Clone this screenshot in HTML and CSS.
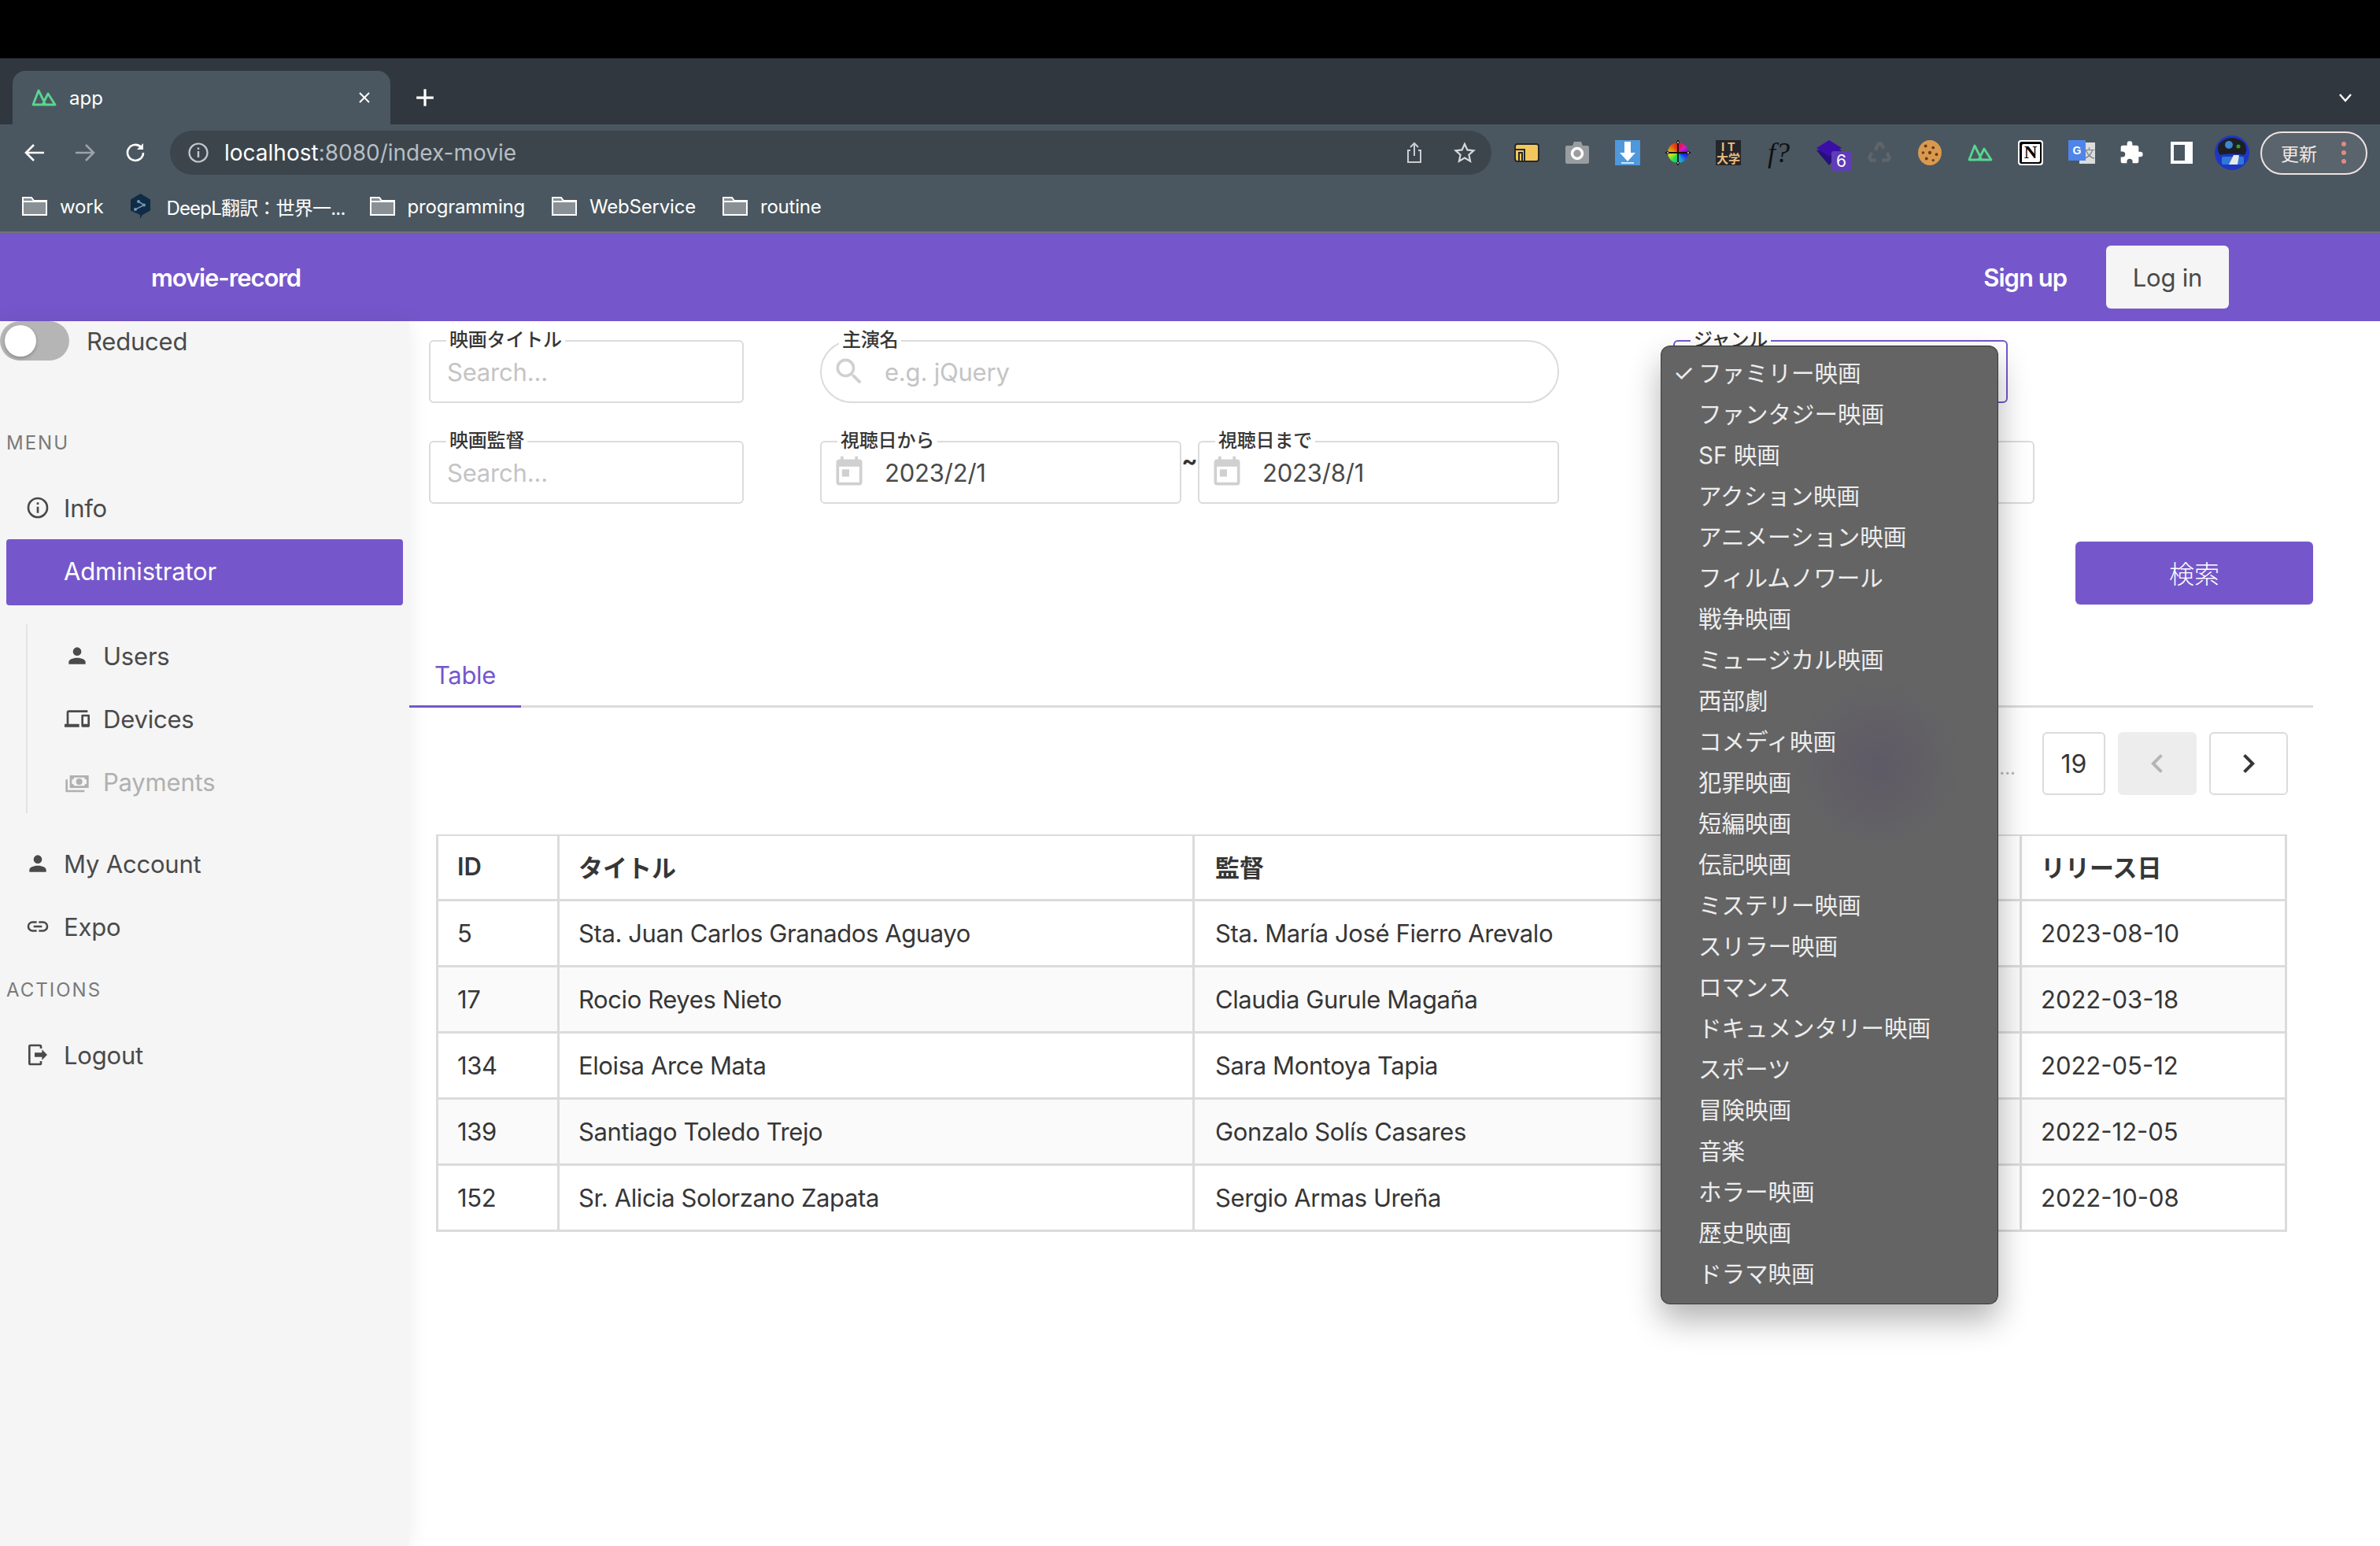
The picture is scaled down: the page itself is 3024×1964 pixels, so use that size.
FILE: index.html
```html
<!DOCTYPE html>
<html lang="ja">
<head>
  <meta charset="UTF-8" />
  <title>app</title>
  <link rel="stylesheet" href="styles.css">
</head>
<body>

<div class="topblack"></div>

<div class="tabstrip">
  <div class="tab">
    <svg class="favicon" viewBox="0 0 32 22"><path d="M12 20H2L9 2l8 16M14 20H30L21 6l-7 14" fill="none" stroke="#58d68f" stroke-width="2.8" stroke-linejoin="round" stroke-linecap="round"/></svg>
    <span class="tab-title">app</span>
    <svg class="tab-close" viewBox="0 0 16 16"><path d="M2 2l12 12M14 2L2 14" stroke="#fff" stroke-width="2"/></svg>
  </div>
  <svg class="tab-plus" viewBox="0 0 24 24"><path d="M12 2v20M2 12h20" stroke="#fff" stroke-width="3"/></svg>
  <svg class="tab-chevron" viewBox="0 0 20 20"><path d="M3 6l7 8 7-8" fill="none" stroke="#fff" stroke-width="2.4"/></svg>
</div>

<div class="toolbar">
  <div class="navbtn"><svg viewBox="0 0 28 28"><path d="M26 14H4M13 4L3 14l10 10" fill="none" stroke="#fff" stroke-width="2.6"/></svg></div>
  <div class="navbtn"><svg viewBox="0 0 28 28"><path d="M2 14h22M15 4l10 10-10 10" fill="none" stroke="#9ba3a8" stroke-width="2.6"/></svg></div>
  <div class="navbtn"><svg viewBox="0 0 28 28"><path d="M24 14a10 10 0 1 1-3-7.2" fill="none" stroke="#fff" stroke-width="2.6"/><path d="M24 2v8h-8z" fill="#fff"/></svg></div>

  <div class="omnibox">
    <svg class="omni-info" viewBox="0 0 28 28"><circle cx="14" cy="14" r="11.5" fill="none" stroke="#c4c9cc" stroke-width="2.2"/><path d="M14 12v8M14 7.5v2.4" stroke="#c4c9cc" stroke-width="2.4"/></svg>
    <span class="url">localhost<span class="url-rest">:8080/index-movie</span></span>
    <div class="omni-action"><svg viewBox="0 0 28 28"><path d="M9 11H6v15h16V11h-3M14 18V3M9 7l5-5 5 5" fill="none" stroke="#c9ced1" stroke-width="2"/></svg></div>
    <div class="omni-action"><svg viewBox="0 0 28 28"><path d="M14 3l3.4 7.4 8 .9-6 5.4 1.7 8L14 20.6 6.900 24.700l1.700-8-6-5.400 8-.9z" fill="none" stroke="#d5d9db" stroke-width="2.200"/></svg></div>
  </div>

  <div class="ext-list">
    <div class="ext"><svg viewBox="0 0 32 24"><rect x="1" y="1" width="30" height="22" rx="3" fill="#f2c75c" stroke="#26282b" stroke-width="2"/><path d="M2 8h11v15M6 23V12h4v11" fill="none" stroke="#26282b" stroke-width="2"/></svg></div>
    <div class="ext"><svg viewBox="0 0 32 30"><path d="M3 6h7l2-5h9l2 5h6a2 2 0 0 1 2 2v19a2 2 0 0 1-2 2H3a2 2 0 0 1-2-2V8a2 2 0 0 1 2-2z" fill="#9a9d9f"/><circle cx="16" cy="16" r="6.500" fill="none" stroke="#fff" stroke-width="3.500"/></svg></div>
    <div class="ext"><svg viewBox="0 0 32 32"><rect width="32" height="32" fill="#4f98db"/><path d="M12 2h8v14h6L16 27 6 16h6z" fill="#fff"/><path d="M8 29h16" stroke="#fff" stroke-width="1.500"/></svg></div>
    <div class="ext"><div class="wheel"><svg viewBox="0 0 32 32"><path d="M16 0v32M0 16h32" stroke="#111" stroke-width="1.800"/><g fill="#ddd" stroke="#111" stroke-width="1"><circle cx="16" cy="3" r="1.500"/><circle cx="16" cy="29" r="1.500"/><circle cx="3" cy="16" r="1.500"/><circle cx="29" cy="16" r="1.500"/></g></svg></div></div>
    <div class="ext"><div class="ext-it"><span>I T</span><span>大学</span></div></div>
    <div class="ext"><span class="ext-f">f?</span></div>
    <div class="ext ext-stack">
      <svg viewBox="0 0 32 32"><path d="M0 13l16-3 16 3-16 19z" fill="#25107c"/><path d="M16 0l16 10-16 11L0 10z" fill="#3c0ea8"/></svg>
      <span class="ext-badge">6</span>
    </div>
    <div class="ext"><svg viewBox="0 0 30 30"><g fill="none" stroke="#5f6569" stroke-width="4"><path d="M10 12l4-8h3l3 6"/><path d="M24 15l3 6-2 3h-7"/><path d="M11 24H5l-2-3 3-6"/></g></svg></div>
    <div class="ext"><svg viewBox="0 0 28 30"><ellipse cx="14" cy="15" rx="14" ry="15" fill="#d99a4f"/><g fill="#6a3b17"><circle cx="9" cy="7" r="1.800"/><circle cx="18" cy="9" r="1.800"/><circle cx="6" cy="15" r="1.600"/><circle cx="14" cy="15" r="2"/><circle cx="22" cy="17" r="1.800"/><circle cx="10" cy="22" r="1.800"/><circle cx="18" cy="24" r="1.600"/></g></svg></div>
    <div class="ext"><svg viewBox="0 0 32 22"><path d="M12 20H2L9 2l8 16M14 20H30L21 6l-7 14" fill="none" stroke="#58d68f" stroke-width="2.800" stroke-linejoin="round" stroke-linecap="round"/></svg></div>
    <div class="ext"><div class="ext-notion">N</div></div>
    <div class="ext ext-translate">
      <span class="tr-back">文</span>
      <span class="tr-front">G</span>
    </div>
    <div class="ext"><svg viewBox="0 0 24 24"><path d="M20.500 11H19V7a2 2 0 0 0-2-2h-4V3.500a2.500 2.500 0 0 0-5 0V5H4a2 2 0 0 0-2 2v3.800h1.500a2.700 2.700 0 0 1 0 5.400H2V20a2 2 0 0 0 2 2h3.800v-1.500a2.700 2.700 0 0 1 5.400 0V22H17a2 2 0 0 0 2-2v-4h1.500a2.500 2.500 0 0 0 0-5z" fill="#fff"/></svg></div>
    <div class="ext"><div class="ext-panel"></div></div>
    <div class="ext"><svg class="ext-avatar" viewBox="0 0 44 44"><circle cx="22" cy="22" r="22" fill="#1f35c4"/><path d="M6 10a22 22 0 0 1 32 0c3 6 3 12-1 15-5-2-25-2-30 0-4-4-4-10-1-15z" fill="#1c2024"/><circle cx="18" cy="12" r="5" fill="#3d86d0"/><circle cx="30" cy="14" r="2.500" fill="#3b9a2f"/><rect x="9" y="27" width="28" height="10" rx="2" fill="#2f78d8"/><path d="M18 37l6-12h7l-2 12z" fill="#e6ebe4"/></svg></div>
  </div>

  <div class="update-pill">
    <span>更新</span>
    <div class="update-dots"><i></i><i></i><i></i></div>
  </div>
</div>

<div class="bookmarks">
  <div class="bookmark"><svg viewBox="0 0 32 24"><path d="M1 1h11l3 4h16v18H1z" fill="#8a9196" stroke="#fff" stroke-width="2"/><path d="M1 6h30" stroke="#fff" stroke-width="2"/></svg><span>work</span></div>
  <div class="bookmark bookmark-deepl"><svg viewBox="0 0 27 32"><path d="M13.500 0L26 7.500v14L16 27l-3 5v-5L1 21.500v-14z" fill="#0f2b46"/><path d="M7 20L18 14.500 11 10" fill="none" stroke="#7496b4" stroke-width="1.600"/><g fill="#7496b4"><circle cx="7" cy="20" r="2"/><circle cx="18" cy="14.500" r="2"/><circle cx="11" cy="10" r="2"/></g></svg><span>DeepL翻訳：世界一...</span></div>
  <div class="bookmark"><svg viewBox="0 0 32 24"><path d="M1 1h11l3 4h16v18H1z" fill="#8a9196" stroke="#fff" stroke-width="2"/><path d="M1 6h30" stroke="#fff" stroke-width="2"/></svg><span>programming</span></div>
  <div class="bookmark"><svg viewBox="0 0 32 24"><path d="M1 1h11l3 4h16v18H1z" fill="#8a9196" stroke="#fff" stroke-width="2"/><path d="M1 6h30" stroke="#fff" stroke-width="2"/></svg><span>WebService</span></div>
  <div class="bookmark"><svg viewBox="0 0 32 24"><path d="M1 1h11l3 4h16v18H1z" fill="#8a9196" stroke="#fff" stroke-width="2"/><path d="M1 6h30" stroke="#fff" stroke-width="2"/></svg><span>routine</span></div>
</div>

<header class="navbar">
  <div class="brand">movie-record</div>
  <div class="nav-signup">Sign up</div>
  <div class="nav-login">Log in</div>
</header>

<div class="layout">

  <aside class="sidebar">
    <div class="reduce-row">
      <div class="switch"><div class="switch-knob"></div></div>
      <span>Reduced</span>
    </div>

    <div class="menu-label label-menu">MENU</div>
    <div class="menu-item"><svg class="mdi" viewBox="0 0 24 24"><path d="M11,9H13V7H11M12,20C7.59,20 4,16.41 4,12C4,7.590 7.590,4 12,4C16.410,4 20,7.590 20,12C20,16.410 16.410,20 12,20M12,2A10,10 0 0,0 2,12A10,10 0 0,0 12,22A10,10 0 0,0 22,12A10,10 0 0,0 12,2M11,17H13V11H11V17Z"/></svg>Info</div>
    <div class="menu-item menu-active">Administrator</div>

    <div class="submenu">
      <div class="menu-item"><svg class="mdi" viewBox="0 0 24 24"><path d="M12,4A4,4 0 0,1 16,8A4,4 0 0,1 12,12A4,4 0 0,1 8,8A4,4 0 0,1 12,4M12,14C16.420,14 20,15.790 20,18V20H4V18C4,15.790 7.580,14 12,14Z"/></svg>Users</div>
      <div class="menu-item"><svg class="mdi" viewBox="0 0 24 24"><path d="M22,17H18V10H22M23,8H17A1,1 0 0,0 16,9V19A1,1 0 0,0 17,20H23A1,1 0 0,0 24,19V9A1,1 0 0,0 23,8M4,6H22V4H4A2,2 0 0,0 2,6V17H0V20H14V17H4V6Z"/></svg>Devices</div>
      <div class="menu-item menu-disabled"><svg class="mdi" viewBox="0 0 24 24"><path d="M5,6H23V18H5V6M14,9A3,3 0 0,1 17,12A3,3 0 0,1 14,15A3,3 0 0,1 11,12A3,3 0 0,1 14,9M9,8A2,2 0 0,1 7,10V14A2,2 0 0,1 9,16H19A2,2 0 0,1 21,14V10A2,2 0 0,1 19,8H9M1,10H3V20H19V22H1V10Z"/></svg>Payments</div>
    </div>

    <div class="menu-item menu-account"><svg class="mdi" viewBox="0 0 24 24"><path d="M12,4A4,4 0 0,1 16,8A4,4 0 0,1 12,12A4,4 0 0,1 8,8A4,4 0 0,1 12,4M12,14C16.420,14 20,15.790 20,18V20H4V18C4,15.790 7.580,14 12,14Z"/></svg>My Account</div>
    <div class="menu-item"><svg class="mdi" viewBox="0 0 24 24"><path d="M3.900,12C3.900,10.290 5.290,8.900 7,8.900H11V7H7A5,5 0 0,0 2,12A5,5 0 0,0 7,17H11V15.100H7C5.290,15.100 3.900,13.710 3.900,12M8,13H16V11H8V13M17,7H13V8.900H17C18.710,8.900 20.100,10.290 20.100,12C20.100,13.710 18.710,15.100 17,15.100H13V17H17A5,5 0 0,0 22,12A5,5 0 0,0 17,7Z"/></svg>Expo</div>

    <div class="menu-label label-actions">ACTIONS</div>
    <div class="menu-item"><svg class="mdi" viewBox="0 0 24 24"><path d="M16,17V14H9V10H16V7L21,12L16,17M14,2A2,2 0 0,1 16,4V6H14V4H5V20H14V18H16V20A2,2 0 0,1 14,22H5A2,2 0 0,1 3,20V4A2,2 0 0,1 5,2H14Z"/></svg>Logout</div>
  </aside>

  <main class="content">
    <div class="form-row">
      <div class="field w-title">
        <label>映画タイトル</label>
        <span class="placeholder">Search...</span>
      </div>
      <div class="field field-round w-actor">
        <label>主演名</label>
        <svg class="field-icon" viewBox="0 0 24 24"><path d="M9.500,3A6.500,6.500 0 0,1 16,9.500C16,11.110 15.410,12.590 14.440,13.730L14.710,14H15.500L20.500,19L19,20.500L14,15.500V14.710L13.730,14.440C12.590,15.410 11.110,16 9.500,16A6.500,6.500 0 0,1 3,9.500A6.500,6.500 0 0,1 9.500,3M9.500,5C7,5 5,7 5,9.500C5,12 7,14 9.500,14C12,14 14,12 14,9.500C14,7 12,5 9.500,5Z"/></svg>
        <span class="placeholder">e.g. jQuery</span>
      </div>
      <div class="field field-focus w-genre">
        <label>ジャンル</label>
        <ul class="genre-menu">
          <li class="checked">ファミリー映画</li>
          <li>ファンタジー映画</li>
          <li>SF 映画</li>
          <li>アクション映画</li>
          <li>アニメーション映画</li>
          <li>フィルムノワール</li>
          <li>戦争映画</li>
          <li>ミュージカル映画</li>
          <li>西部劇</li>
          <li>コメディ映画</li>
          <li>犯罪映画</li>
          <li>短編映画</li>
          <li>伝記映画</li>
          <li>ミステリー映画</li>
          <li>スリラー映画</li>
          <li>ロマンス</li>
          <li>ドキュメンタリー映画</li>
          <li>スポーツ</li>
          <li>冒険映画</li>
          <li>音楽</li>
          <li>ホラー映画</li>
          <li>歴史映画</li>
          <li>ドラマ映画</li>
        </ul>
      </div>
    </div>

    <div class="form-row form-row-2">
      <div class="field w-title">
        <label>映画監督</label>
        <span class="placeholder">Search...</span>
      </div>
      <div class="field w-date date-from">
        <label>視聴日から</label>
        <svg class="field-icon" viewBox="0 0 24 24"><path d="M7,10H12V15H7M19,19H5V8H19M19,3H18V1H16V3H8V1H6V3H5C3.890,3 3,3.900 3,5V19A2,2 0 0,0 5,21H19A2,2 0 0,0 21,19V5A2,2 0 0,0 19,3Z"/></svg>
        <span class="date-value">2023/2/1</span>
      </div>
      <span class="tilde">~</span>
      <div class="field w-date">
        <label>視聴日まで</label>
        <svg class="field-icon" viewBox="0 0 24 24"><path d="M7,10H12V15H7M19,19H5V8H19M19,3H18V1H16V3H8V1H6V3H5C3.890,3 3,3.900 3,5V19A2,2 0 0,0 5,21H19A2,2 0 0,0 21,19V5A2,2 0 0,0 19,3Z"/></svg>
        <span class="date-value">2023/8/1</span>
      </div>
      <div class="field w-date w-hidden"></div>
    </div>

    <div class="search-row">
      <button class="search-btn">検索</button>
    </div>

    <div class="tabs">
      <div class="tabs-item">Table</div>
    </div>

    <div class="pagination">
      <span class="page-dots">...</span>
      <div class="page-box page-num">19</div>
      <div class="page-box page-prev"><svg viewBox="0 0 24 24"><path d="M15.410,16.580L10.830,12L15.410,7.410L14,6L8,12L14,18L15.410,16.580Z"/></svg></div>
      <div class="page-box"><svg viewBox="0 0 24 24"><path d="M8.590,16.580L13.170,12L8.590,7.410L10,6L16,12L10,18L8.590,16.580Z"/></svg></div>
    </div>

    <table class="movie-table">
      <colgroup><col class="c-id"><col class="c-title"><col class="c-director"><col class="c-date"></colgroup>
      <thead>
        <tr><th>ID</th><th>タイトル</th><th class="cell-director">監督</th><th>リリース日</th></tr>
      </thead>
      <tbody>
        <tr><td>5</td><td>Sta. Juan Carlos Granados Aguayo</td><td class="cell-director">Sta. María José Fierro Arevalo</td><td class="cell-date">2023-08-10</td></tr>
        <tr><td>17</td><td>Rocio Reyes Nieto</td><td class="cell-director">Claudia Gurule Magaña</td><td class="cell-date">2022-03-18</td></tr>
        <tr><td>134</td><td>Eloisa Arce Mata</td><td class="cell-director">Sara Montoya Tapia</td><td class="cell-date">2022-05-12</td></tr>
        <tr><td>139</td><td>Santiago Toledo Trejo</td><td class="cell-director">Gonzalo Solís Casares</td><td class="cell-date">2022-12-05</td></tr>
        <tr><td>152</td><td>Sr. Alicia Solorzano Zapata</td><td class="cell-director">Sergio Armas Ureña</td><td class="cell-date">2022-10-08</td></tr>
      </tbody>
    </table>
  </main>

</div>

</body>
</html>
```

FILE: styles.css
```css
html, body {
  margin: 0;
  padding: 0;
  height: 100%;
  overflow: hidden;
  background: #fff;
  font-family: Inter, "Noto Sans CJK JP", sans-serif;
  color: #4a4a4a;
}

svg {
  display: block;
}

/* browser chrome */
.topblack {
  height: 74px;
  background: #000;
}

.tabstrip {
  height: 84px;
  background: #30373e;
  display: flex;
  align-items: flex-end;
  position: relative;
}

.tab {
  width: 480px;
  height: 68px;
  margin-left: 16px;
  padding-left: 24px;
  box-sizing: border-box;
  background: #4a5760;
  border-radius: 16px 16px 0 0;
  display: flex;
  align-items: center;
  color: #fff;
  font-size: 24px;
}

.favicon {
  width: 32px;
  height: 22px;
}

.tab-title {
  margin-left: 16px;
}

.tab-close {
  width: 16px;
  height: 16px;
  margin-left: 324px;
}

.tab-plus {
  width: 26px;
  height: 26px;
  margin: 0 0 21px 31px;
}

.tab-chevron {
  width: 20px;
  height: 20px;
  margin: 0 34px 24px auto;
  margin-left: auto;
}

.toolbar {
  height: 72px;
  background: #4a5760;
  display: flex;
  align-items: center;
  padding-left: 12px;
}

.navbtn {
  width: 64px;
  display: flex;
  justify-content: center;
}

.navbtn svg {
  width: 28px;
  height: 28px;
}

.omnibox {
  width: 1679px;
  height: 56px;
  margin-left: 12px;
  padding: 0 2px 0 22px;
  box-sizing: border-box;
  border-radius: 28px;
  background: #3c454c;
  display: flex;
  align-items: center;
}

.omni-info {
  width: 28px;
  height: 28px;
}

.url {
  margin-left: 19px;
  font-size: 28px;
  color: #fff;
  flex: 1;
}

.url-rest {
  color: #b8bec2;
}

.omni-action {
  width: 64px;
  display: flex;
  justify-content: center;
}

.omni-action svg {
  width: 28px;
  height: 28px;
}

.ext-list {
  display: flex;
  margin-left: 13px;
}

.ext {
  width: 64px;
  height: 44px;
  display: flex;
  align-items: center;
  justify-content: center;
  position: relative;
}

.ext > svg {
  width: 32px;
  height: 32px;
}

.ext > .ext-avatar {
  width: 44px;
  height: 44px;
}

.wheel {
  width: 26px;
  height: 26px;
  border-radius: 50%;
  background: conic-gradient(#e01818, #e018c8, #2418e0, #18a0e0, #18e050, #d8e018, #e07018, #e01818);
}

.wheel svg {
  width: 32px;
  height: 32px;
  margin: -3px;
}

.ext-it {
  width: 32px;
  height: 32px;
  background: #23262a;
  color: #eebb7c;
  font-size: 15px;
  font-weight: 700;
  line-height: 15px;
  text-align: center;
  display: flex;
  flex-direction: column;
  justify-content: center;
}

.ext-f {
  font-family: "Liberation Serif", serif;
  font-style: italic;
  font-size: 36px;
  color: #111;
}

.ext-badge {
  position: absolute;
  left: 35px;
  top: 20px;
  width: 25px;
  height: 25px;
  border-radius: 3px;
  background: #5f3db8;
  color: #fff;
  font-size: 21px;
  line-height: 25px;
  text-align: center;
}

.ext-notion {
  width: 28px;
  height: 28px;
  border: 2px solid #fff;
  border-radius: 4px;
  background: #fff;
  box-shadow: inset 3px 3px 0 #000, inset -2px -2px 0 #000;
  color: #000;
  font-family: "Liberation Serif", serif;
  font-weight: 700;
  font-size: 23px;
  line-height: 28px;
  text-align: center;
}

.ext-translate {
  font-family: "Liberation Sans", "Noto Sans CJK JP", sans-serif;
}

.tr-back {
  position: absolute;
  left: 30px;
  top: 9px;
  width: 20px;
  height: 27px;
  background: #dcdcdc;
  color: #7b8288;
  font-size: 15px;
  line-height: 27px;
  text-align: right;
}

.tr-front {
  position: absolute;
  left: 16px;
  top: 6px;
  width: 22px;
  height: 26px;
  background: #4d85ea;
  color: #fff;
  font-size: 14px;
  font-weight: 700;
  line-height: 26px;
  text-align: center;
}

.ext-panel {
  width: 28px;
  height: 28px;
  box-sizing: border-box;
  border: 4px solid #fff;
  border-right-width: 10px;
  background: #4a5760;
}

.update-pill {
  width: 136px;
  height: 55px;
  margin-left: 4px;
  box-sizing: border-box;
  border: 2px solid #f0e2df;
  border-radius: 28px;
  background: #59646c;
  color: #f2e8e6;
  font-size: 23px;
  display: flex;
  align-items: center;
  padding-left: 24px;
}

.update-dots {
  margin-left: 31px;
  display: flex;
  flex-direction: column;
  gap: 5px;
}

.update-dots i {
  display: block;
  width: 6px;
  height: 6px;
  border-radius: 50%;
  background: #e08b80;
}

.bookmarks {
  height: 64px;
  box-sizing: content-box;
  background: #4a5760;
  border-bottom: 2px solid #6f7477;
  display: flex;
  align-items: center;
  padding-left: 28px;
  color: #fff;
  font-size: 24px;
  letter-spacing: -0.2px;
}

.bookmark {
  display: flex;
  align-items: center;
  gap: 16px;
  margin-right: 34px;
}

.bookmark svg {
  width: 32px;
  height: 24px;
}

.bookmark-deepl {
  gap: 19px;
  letter-spacing: -0.8px;
  margin-right: 31px;
}

.bookmark-deepl svg {
  width: 27px;
  height: 32px;
}

/* app */
.navbar {
  height: 112px;
  background: #7557cb;
  display: flex;
  align-items: center;
  padding-left: 192px;
  color: #fff;
}

.brand {
  font-size: 31px;
  font-weight: 600;
  letter-spacing: -1.1px;
}

.nav-signup {
  margin-left: auto;
  font-size: 31px;
  font-weight: 600;
  letter-spacing: -1px;
}

.nav-login {
  width: 156px;
  height: 80px;
  margin: 0 192px 0 50px;
  border-radius: 6px;
  background: #f5f5f5;
  color: #4a4a4a;
  font-size: 31px;
  letter-spacing: -0.2px;
  display: flex;
  align-items: center;
  justify-content: center;
}

.layout {
  display: flex;
  height: 1556px;
}

.sidebar {
  width: 520px;
  flex-shrink: 0;
  background: #f5f5f5;
  box-shadow: 0 0 24px rgba(0, 0, 0, 0.08);
  font-size: 31px;
  letter-spacing: -0.2px;
}

.reduce-row {
  height: 50px;
  display: flex;
  align-items: center;
  gap: 22px;
}

.switch {
  width: 88px;
  height: 50px;
  padding: 5px 6px;
  box-sizing: border-box;
  border-radius: 25px;
  background: #b5b5b5;
}

.switch-knob {
  width: 40px;
  height: 40px;
  border-radius: 50%;
  background: #fff;
  box-shadow: 0 2px 4px rgba(0, 0, 0, 0.25);
}

.menu-label {
  padding-left: 8px;
  font-size: 24px;
  line-height: 30px;
  letter-spacing: 2px;
  color: #7a7a7a;
}

.label-menu {
  margin-top: 90px;
  margin-bottom: 27px;
}

.label-actions {
  margin-top: 26px;
  margin-bottom: 27px;
}

.menu-item {
  height: 80px;
  display: flex;
  align-items: center;
  gap: 17px;
  padding-left: 32px;
  color: #4a4a4a;
}

.mdi {
  width: 32px;
  height: 32px;
  fill: currentColor;
  flex-shrink: 0;
}

.menu-active {
  height: 84px;
  margin: 0 8px;
  padding: 0 0 3px 73px;
  box-sizing: border-box;
  border-radius: 4px;
  background: #7557cb;
  color: #fff;
}

.submenu {
  margin: 24px 0 24px 33px;
  padding-left: 15px;
  border-left: 2px solid #e4e4e4;
}

.menu-disabled {
  color: #b0b0b0;
}

.content {
  flex: 1;
  padding: 24px 85px 0 25px;
  min-width: 0;
}

.form-row {
  display: flex;
}

.form-row-2 {
  margin-top: 48px;
}

.field {
  height: 80px;
  box-sizing: border-box;
  border: 2px solid #dbdbdb;
  border-radius: 6px;
  position: relative;
  display: flex;
  align-items: center;
  padding-left: 21px;
  font-size: 31px;
  letter-spacing: -0.2px;
  flex-shrink: 0;
}

.field label {
  position: absolute;
  left: 20px;
  top: -15px;
  padding: 0 4px;
  background: #fff;
  color: #363636;
  font-size: 24px;
  font-weight: 500;
  line-height: 26px;
  white-space: nowrap;
}

.placeholder {
  color: #c4c4c4;
}

.w-title {
  width: 400px;
}

.w-actor {
  width: 939px;
  margin-left: 97px;
}

.field-round {
  border-radius: 40px;
}

.field-round label {
  left: 22px;
}

.w-genre {
  width: 425px;
  margin-left: 145px;
}

.field-focus {
  border-color: #7557cb;
}

.w-date {
  width: 459px;
}

.date-from {
  margin-left: 97px;
}

.w-hidden {
  margin-left: 145px;
}

.tilde {
  width: 21px;
  text-align: center;
  align-self: center;
  font-size: 30px;
  font-weight: 700;
  line-height: 30px;
  margin-top: -30px;
  color: #363636;
}

.field-icon {
  width: 44px;
  height: 44px;
  fill: #d0d0d0;
  margin-left: -8px;
  margin-right: 23px;
  flex-shrink: 0;
}

.date-value {
  color: #4a4a4a;
}

.genre-menu {
  position: absolute;
  left: -18px;
  top: 5px;
  width: 429px;
  height: 1218px;
  margin: 0;
  padding: 8px 0 0;
  box-sizing: border-box;
  list-style: none;
  border: 1px solid #3a3a3a;
  border-top-color: #2e2e2e;
  border-radius: 12px;
  background: radial-gradient(circle at 275px 532px, #5e5a66 0, #646464 110px);
  box-shadow: 0 20px 40px rgba(0, 0, 0, 0.3);
  color: #ededed;
  font-size: 29.5px;
  letter-spacing: 0;
  z-index: 5;
}

.genre-menu li {
  height: 52px;
  line-height: 52px;
  padding-left: 47px;
  position: relative;
}

.genre-menu li.checked::before {
  content: "✓";
  position: absolute;
  left: 15px;
  font-size: 30px;
}

.search-row {
  display: flex;
  margin-top: 48px;
  justify-content: flex-end;
}

.search-btn {
  width: 302px;
  height: 80px;
  padding: 0 0 3px;
  border: none;
  border-radius: 6px;
  background: #7557cb;
  color: #fff;
  font-family: inherit;
  font-size: 32px;
  font-weight: 300;
}

.tabs {
  margin: 48px 0 0 -25px;
  height: 80px;
  border-bottom: 3px solid #dbdbdb;
  display: flex;
}

.tabs-item {
  width: 142px;
  height: 80px;
  box-sizing: content-box;
  border-bottom: 3px solid #7557cb;
  margin-bottom: -3px;
  color: #7557cb;
  font-size: 31px;
  letter-spacing: -0.3px;
  line-height: 84px;
  text-align: center;
}

.pagination {
  display: flex;
  justify-content: flex-end;
  align-items: center;
  gap: 16px;
  margin: 31px 32px 0 0;
}

.page-dots {
  color: #b5b5b5;
  font-size: 24px;
  margin-right: 18px;
  padding-top: 10px;
}

.page-box {
  width: 100px;
  height: 80px;
  box-sizing: border-box;
  border: 2px solid #dbdbdb;
  border-radius: 6px;
  display: flex;
  align-items: center;
  justify-content: center;
  font-size: 32px;
  color: #363636;
}

.page-box svg {
  width: 48px;
  height: 48px;
  fill: #363636;
}

.page-num {
  width: 80px;
}

.page-prev {
  background: #ededed;
  border-color: #ededed;
}

.page-prev svg {
  fill: #b5b5b5;
}

.movie-table {
  width: 2349px;
  margin: 50px 0 0 9px;
  table-layout: fixed;
  border-collapse: collapse;
  font-size: 31px;
  letter-spacing: -0.4px;
  color: #363636;
}

.c-id { width: 154px; }
.c-title { width: 807px; }
.c-director { width: 1051px; }
.c-date { width: 337px; }

.movie-table th,
.movie-table td {
  height: 84px;
  padding: 0 0 0 24px;
  box-sizing: border-box;
  border: 3px solid #dbdbdb;
  border-width: 2px 3px 3px;
  text-align: left;
  font-weight: 400;
  white-space: nowrap;
}

.movie-table th {
  font-weight: 600;
  height: 82px;
  padding-bottom: 2px;
  letter-spacing: 0;
}

.movie-table th.cell-director,
.movie-table td.cell-director {
  padding-left: 26px;
}

.movie-table td.cell-date {
  letter-spacing: 0;
}

.movie-table tbody tr:nth-child(even) {
  background: #fafafa;
}
```
